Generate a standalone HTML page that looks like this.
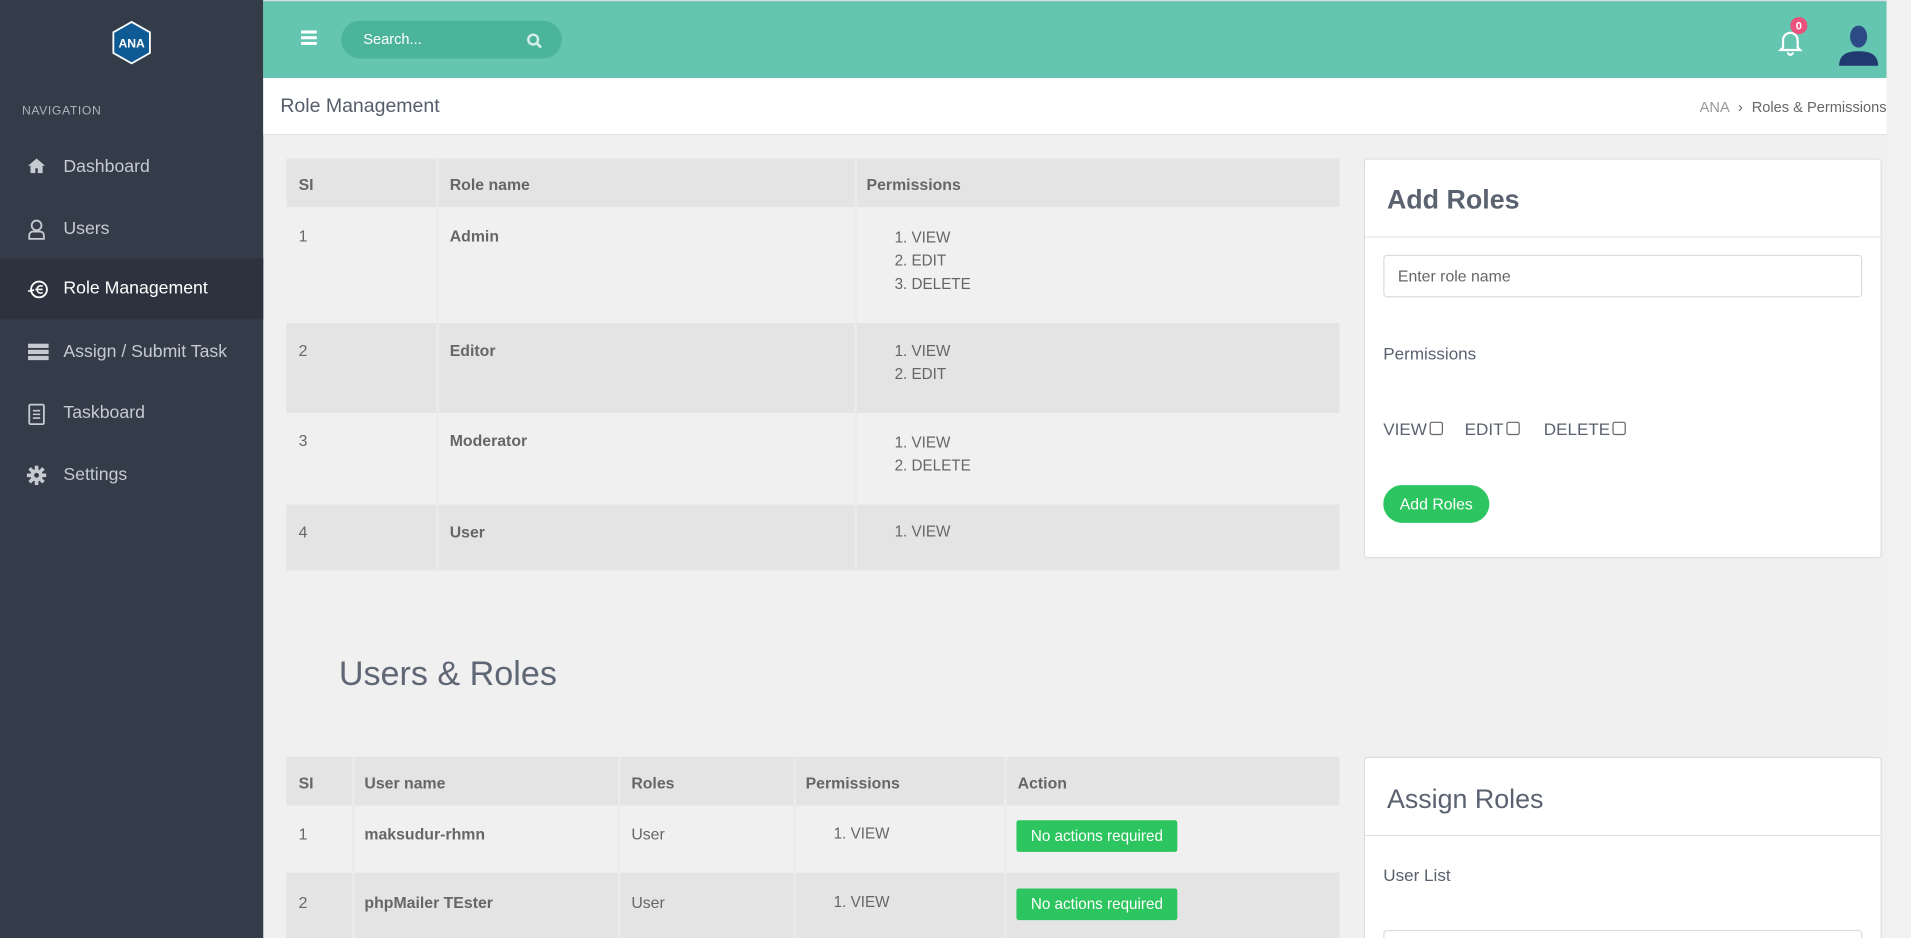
<!DOCTYPE html>
<html><head><meta charset="utf-8"><style>
*{margin:0;padding:0;box-sizing:border-box}
html,body{width:1911px;height:937px;overflow:hidden;background:#f0f0f0}
#w{position:absolute;left:0;top:0;width:1568px;height:770px;transform:scale(1.21875);transform-origin:0 0;font-family:"Liberation Sans",sans-serif;background:#f0f0f0;overflow:hidden}
.a{position:absolute}
#sb{left:0;top:0;width:216px;height:770px;background:#343c4a}
.nav{position:absolute;left:0;width:216px;height:50px;color:#c6cad1;font-size:14.5px;line-height:50px;padding-left:52px}
.nav svg{position:absolute;left:22px;top:17px}
.t{color:#666;font-size:13px}
.b{font-weight:bold}
.card{position:absolute;background:#fff;border:1px solid #ddd;border-radius:3px}
.row{position:absolute;left:235px;width:864px}
.badge{position:absolute;left:834px;width:132px;height:26px;background:#2dc55f;color:#fff;font-size:12.5px;line-height:26px;text-align:center;border-radius:2px}
</style></head><body><div id="w">
<div id="sb" class="a">
 <svg class="a" style="left:92px;top:17px" width="32" height="36" viewBox="0 0 32 36"><polygon points="16,1 31,9.5 31,26.5 16,35 1,26.5 1,9.5" fill="#0d5a94" stroke="#fff" stroke-width="1.5"/><text x="16" y="22" font-size="10" font-weight="bold" fill="#fff" text-anchor="middle" font-family="Liberation Sans">ANA</text></svg>
 <div class="a" style="left:18px;top:86px;font-size:10px;color:#aeb4bd;letter-spacing:.5px">NAVIGATION</div>
 <div class="nav" style="top:112px"><svg width="16" height="14" viewBox="0 0 16 14"><path d="M8 1L1 7h2v6h4V9h2v4h4V7h2z" fill="#c6cad1"/></svg>Dashboard</div>
 <div class="nav" style="top:163px"><svg width="16" height="17" viewBox="0 0 16 17"><circle cx="8" cy="5" r="4" fill="none" stroke="#c6cad1" stroke-width="1.5"/><path d="M2 16v-3a3 3 0 0 1 3-3h6a3 3 0 0 1 3 3v3z" fill="none" stroke="#c6cad1" stroke-width="1.5"/></svg>Users</div>
 <div class="nav" style="top:212px;background:#2c333e;color:#fff"><svg width="18" height="17" viewBox="0 0 18 17"><circle cx="10" cy="8.5" r="6.5" fill="none" stroke="#fff" stroke-width="1.5"/><path d="M13 6a3 3 0 1 0 0 5M7 8.5h6M1 10l5-1" fill="none" stroke="#fff" stroke-width="1.3"/></svg>Role Management</div>
 <div class="nav" style="top:264px"><svg width="18" height="15" viewBox="0 0 18 15"><rect x="1" y="1" width="17" height="3.5" fill="#c6cad1"/><rect x="1" y="6" width="17" height="3.5" fill="#c6cad1"/><rect x="1" y="11" width="17" height="3.5" fill="#c6cad1"/></svg>Assign / Submit Task</div>
 <div class="nav" style="top:314px"><svg width="16" height="18" viewBox="0 0 16 18"><rect x="2" y="1" width="12" height="16" rx="1" fill="none" stroke="#c6cad1" stroke-width="1.5"/><path d="M5 6h6M5 9h6M5 12h6" stroke="#c6cad1" stroke-width="1.3"/></svg>Taskboard</div>
 <div class="nav" style="top:365px"><svg width="16" height="16" viewBox="0 0 16 16"><circle cx="8" cy="8" r="5" fill="#c6cad1"/><path d="M8 0v16M0 8h16M2.3 2.3l11.4 11.4M13.7 2.3L2.3 13.7" stroke="#c6cad1" stroke-width="3"/><circle cx="8" cy="8" r="2" fill="#343c4a"/></svg>Settings</div>
</div>
<div class="a" style="left:216px;top:0;width:1332px;height:64px;background:#64c5b0;border-top:1px solid #d9dfe0"></div>
<svg class="a" style="left:247px;top:25px" width="13" height="12"><rect y="0" width="13" height="2.5" fill="#fff"/><rect y="4.7" width="13" height="2.5" fill="#fff"/><rect y="9.4" width="13" height="2.5" fill="#fff"/></svg>
<div class="a" style="left:280px;top:17px;width:181px;height:31px;border-radius:16px;background:#4bb49b;color:#fff;font-size:12px;line-height:31px;padding-left:18px">Search...</div>
<svg class="a" style="left:432px;top:27px" width="13" height="13"><circle cx="5.5" cy="5.5" r="4" fill="none" stroke="#d4efe8" stroke-width="2"/><path d="M8.5 8.5l3.5 3.5" stroke="#d4efe8" stroke-width="2.2"/></svg>
<svg class="a" style="left:1459px;top:22px" width="22" height="24"><path d="M4 17V11a6 6 0 0 1 12 0v6l2 2H2z" fill="none" stroke="#fff" stroke-width="1.8"/><path d="M8 21a2 2 0 0 0 4 0" stroke="#fff" stroke-width="1.8" fill="none"/></svg>
<div class="a" style="left:1469px;top:14px;width:14px;height:14px;border-radius:50%;background:#ea527d;color:#fff;font-size:9px;font-weight:bold;text-align:center;line-height:14px">0</div>
<svg class="a" style="left:1508px;top:18px" width="34" height="36"><ellipse cx="17" cy="12" rx="7" ry="9" fill="#2c4a85"/><path d="M1 36c0-9 6-12 16-12s16 3 16 12z" fill="#203a70"/></svg>
<div class="a" style="left:1548px;top:0;width:20px;height:770px;background:#f1f1f1"></div>
<div class="a" style="left:216px;top:64px;width:1332px;height:47px;background:#fff;border-bottom:1px solid #e3e3e3"></div>
<div class="a" style="left:230px;top:79px;font-size:16px;color:#555d6b">Role Management</div>
<div class="a" style="right:20px;top:81px;font-size:12px;color:#999;white-space:nowrap">ANA <span style="color:#666;margin:0 4px">›</span> <span style="color:#666">Roles &amp; Permissions</span></div>

<div class="row" style="top:130px;height:40px;background:#e4e4e4"></div>
<div class="row" style="top:170px;height:95px;background:#f0f0f0"></div>
<div class="row" style="top:265px;height:74px;background:#e4e4e4"></div>
<div class="row" style="top:339px;height:75px;background:#f0f0f0"></div>
<div class="row" style="top:414px;height:54px;background:#e4e4e4"></div>
<div class="a" style="left:358px;top:130px;width:2px;height:338px;background:#ebebeb"></div>
<div class="a" style="left:701px;top:130px;width:2px;height:338px;background:#ebebeb"></div>
<div class="a t b" style="left:245px;top:144px">SI</div>
<div class="a t b" style="left:369px;top:144px">Role name</div>
<div class="a t b" style="left:711px;top:144px">Permissions</div>
<div class="a t" style="left:245px;top:186px">1</div><div class="a t b" style="left:369px;top:186px">Admin</div>
<div class="a t" style="left:734px;top:186px;line-height:19px;font-size:12.5px">1. VIEW<br>2. EDIT<br>3. DELETE</div>
<div class="a t" style="left:245px;top:280px">2</div><div class="a t b" style="left:369px;top:280px">Editor</div>
<div class="a t" style="left:734px;top:279px;line-height:19px;font-size:12.5px">1. VIEW<br>2. EDIT</div>
<div class="a t" style="left:245px;top:354px">3</div><div class="a t b" style="left:369px;top:354px">Moderator</div>
<div class="a t" style="left:734px;top:354px;line-height:19px;font-size:12.5px">1. VIEW<br>2. DELETE</div>
<div class="a t" style="left:245px;top:429px">4</div><div class="a t b" style="left:369px;top:429px">User</div>
<div class="a t" style="left:734px;top:429px;font-size:12.5px">1. VIEW</div>

<div class="card" style="left:1119px;top:130px;width:425px;height:328px">
 <div class="a" style="left:18px;top:20px;font-size:22px;color:#5a6270;font-weight:bold">Add Roles</div>
 <div class="a" style="left:0;top:63px;width:423px;height:1px;background:#e3e3e3"></div>
 <div class="a" style="left:15px;top:78px;width:393px;height:35px;border:1px solid #ddd;border-radius:3px;font-size:13px;color:#666;line-height:33px;padding-left:11px">Enter role name</div>
 <div class="a" style="left:15px;top:151px;font-size:14px;color:#5a6270">Permissions</div>
 <div class="a" style="left:15px;top:213px;font-size:14px;color:#5a6270">VIEW<span style="display:inline-block;width:11px;height:11px;border:1px solid #666;border-radius:2px;margin:0 18px 0 2px"></span>EDIT<span style="display:inline-block;width:11px;height:11px;border:1px solid #666;border-radius:2px;margin:0 20px 0 2px"></span>DELETE<span style="display:inline-block;width:11px;height:11px;border:1px solid #666;border-radius:2px;margin-left:2px"></span></div>
 <div class="a" style="left:15px;top:267px;width:87px;height:31px;border-radius:16px;background:#2dc55f;color:#fff;font-size:13px;line-height:31px;text-align:center">Add Roles</div>
</div>

<div class="a" style="left:278px;top:537px;font-size:28px;color:#5f6775">Users &amp; Roles</div>

<div class="row" style="top:621px;height:40px;background:#e4e4e4"></div>
<div class="row" style="top:661px;height:55px;background:#f0f0f0"></div>
<div class="row" style="top:716px;height:60px;background:#e4e4e4"></div>
<div class="a" style="left:289px;top:621px;width:2px;height:150px;background:#ebebeb"></div>
<div class="a" style="left:507px;top:621px;width:2px;height:150px;background:#ebebeb"></div>
<div class="a" style="left:651px;top:621px;width:2px;height:150px;background:#ebebeb"></div>
<div class="a" style="left:824px;top:621px;width:2px;height:150px;background:#ebebeb"></div>
<div class="a t b" style="left:245px;top:635px">SI</div>
<div class="a t b" style="left:299px;top:635px">User name</div>
<div class="a t b" style="left:518px;top:635px">Roles</div>
<div class="a t b" style="left:661px;top:635px">Permissions</div>
<div class="a t b" style="left:835px;top:635px">Action</div>
<div class="a t" style="left:245px;top:677px">1</div><div class="a t b" style="left:299px;top:677px">maksudur-rhmn</div><div class="a t" style="left:518px;top:677px">User</div><div class="a t" style="left:684px;top:677px;font-size:12.5px">1. VIEW</div>
<div class="badge" style="top:673px">No actions required</div>
<div class="a t" style="left:245px;top:733px">2</div><div class="a t b" style="left:299px;top:733px">phpMailer TEster</div><div class="a t" style="left:518px;top:733px">User</div><div class="a t" style="left:684px;top:733px;font-size:12.5px">1. VIEW</div>
<div class="badge" style="top:729px">No actions required</div>

<div class="card" style="left:1119px;top:621px;width:425px;height:160px">
 <div class="a" style="left:18px;top:21px;font-size:22px;color:#5a6270">Assign Roles</div>
 <div class="a" style="left:0;top:63px;width:423px;height:1px;background:#e3e3e3"></div>
 <div class="a" style="left:15px;top:88px;font-size:14px;color:#5a6270">User List</div>
 <div class="a" style="left:15px;top:141px;width:393px;height:35px;border:1px solid #ddd;border-radius:3px"></div>
</div>
</div></body></html>
